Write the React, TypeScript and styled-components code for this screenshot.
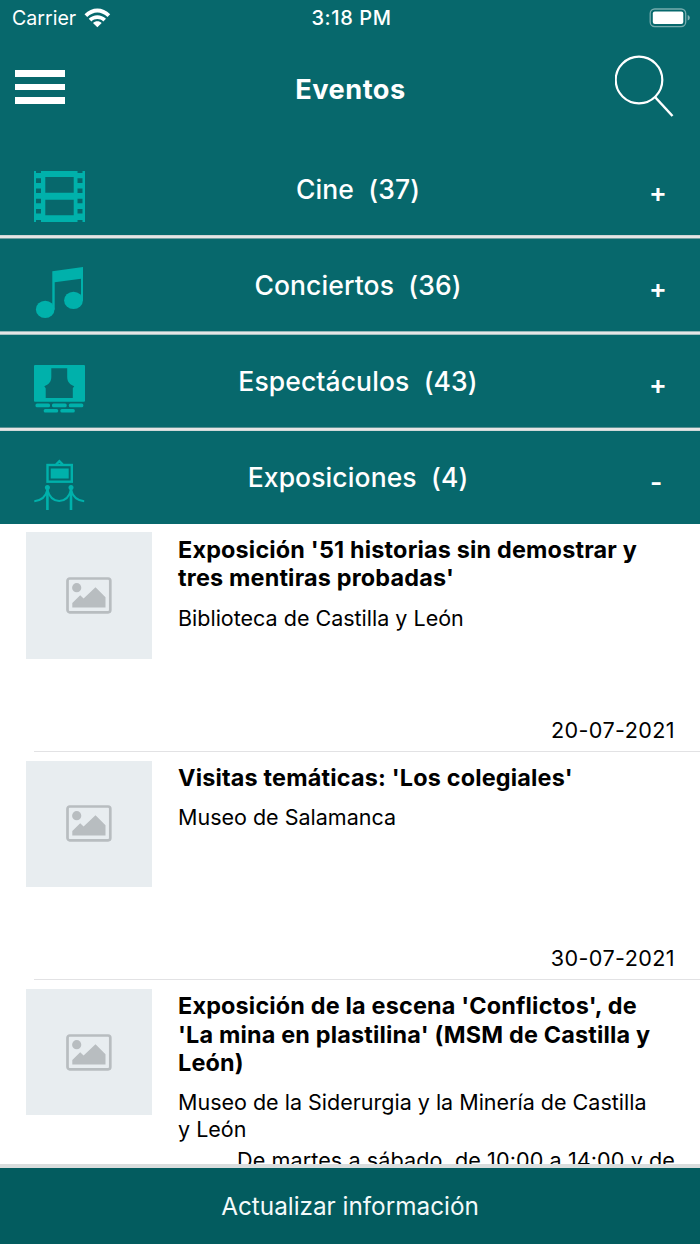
import React from 'react';
import styled, { createGlobalStyle } from 'styled-components';

const GlobalStyle = createGlobalStyle`
  * { box-sizing: border-box; }
  body { margin: 0; font-family: Inter, "Liberation Sans", sans-serif; }
  h1, h2, h3, p, ul { margin: 0; padding: 0; font: inherit; }
  button { border: 0; padding: 0; background: none; color: inherit; font: inherit; }
`;

const teal = '#07686c';
const accent = '#00b1ab';

const Screen = styled.div`
  display: flex;
  flex-direction: column;
  width: 700px;
  height: 1244px;
  overflow: hidden;
  background: #fff;
`;

const StatusBar = styled.div`
  flex: none;
  display: grid;
  grid-template-columns: 1fr auto 1fr;
  align-items: center;
  height: 36px;
  padding: 0 9px 0 12px;
  background: ${teal};
  color: #fff;
`;

const Carrier = styled.div`
  display: flex;
  align-items: center;
  gap: 8px;
  font-size: 19.6px;
  line-height: 24px;
`;

const Clock = styled.div`
  font-size: 20px;
  line-height: 24px;
  font-weight: 500;
  letter-spacing: 0.6px;
`;

const Battery = styled.svg`
  justify-self: end;
  display: block;
  margin-top: -1px;
`;

const NavBar = styled.header`
  flex: none;
  display: grid;
  grid-template-columns: 100px 1fr 100px;
  height: 107px;
  background: ${teal};
  color: #fff;
`;

const MenuButton = styled.button`
  display: flex;
  flex-direction: column;
  gap: 7px;
  width: 50px;
  margin: 34px 0 0 15px;
  align-self: start;
`;

const MenuBar = styled.span`
  height: 6.6px;
  background: #fff;
`;

const NavTitle = styled.h1`
  padding: 37px 0 0 1px;
  text-align: center;
  font-size: 27.2px;
  line-height: 34px;
  font-weight: 700;
  letter-spacing: 0.5px;
`;

const SearchButton = styled.button`
  justify-self: end;
  align-self: start;
  margin: 18px 25px 0 0;
  line-height: 0;
`;

const CategoryRow = styled.button<{ $open: boolean }>`
  flex: none;
  display: grid;
  grid-template-columns: 52px 1fr 51px;
  align-items: start;
  height: ${(p) => (p.$open ? 93 : 92)}px;
  padding-left: 34px;
  background: ${teal};
  color: #fff;
`;

const CategoryIcon = styled.svg`
  display: block;
  margin-top: 28px;
  fill: ${accent};
`;

const CategoryName = styled.span`
  padding: 30px 19px 0 0;
  text-align: center;
  white-space: pre;
  font-size: 26.5px;
  line-height: 32px;
  font-weight: 550;
  letter-spacing: 0.1px;
`;

const Toggle = styled.span<{ $open: boolean }>`
  padding: ${(p) => (p.$open ? '35px 0 0 1px' : '33px 0 0 0')};
  text-align: left;
  font-size: 26.5px;
  line-height: 32px;
  font-weight: 600;
`;

const Divider = styled.div<{ $top: string; $bottom: string }>`
  flex: none;
  height: 4px;
  background: #e5e5e5;
  border-top: 1px solid ${(p) => p.$top};
  border-bottom: 1px solid ${(p) => p.$bottom};
`;

const EventList = styled.ul`
  flex: 1;
  min-height: 0;
  overflow: hidden;
  list-style: none;
`;

const EventItem = styled.li<{ $fit: boolean }>`
  display: flex;
  flex-direction: column;
  min-height: ${(p) => (p.$fit ? '0' : '228.2px')};
`;

const EventContent = styled.div`
  flex: 1;
  display: grid;
  grid-template-columns: 127px 1fr;
  column-gap: 25.500px;
  padding: 8.4px 25px 7.4px 25.5px;
`;

const Thumb = styled.div`
  display: flex;
  align-items: center;
  justify-content: center;
  width: 126.5px;
  height: 126.5px;
  padding-left: 1px;
  background: #e8edf0;
`;

const EventText = styled.div`
  display: flex;
  flex-direction: column;
  padding-top: 3.6px;
  color: #000;
`;

const EventTitle = styled.h3`
  white-space: pre-line;
  font-size: 23.4px;
  line-height: 28.4px;
  font-weight: 700;
  letter-spacing: 0.18px;
`;

const Venue = styled.p`
  margin-top: 11.8px;
  white-space: pre-line;
  font-size: 21.5px;
  line-height: 26.2px;
`;

const When = styled.p<{ $spacing: number }>`
  margin-top: auto;
  padding-top: 5.4px;
  text-align: right;
  white-space: nowrap;
  font-size: 21.6px;
  line-height: 26.2px;
  letter-spacing: ${(p) => p.$spacing}px;
`;

const Separator = styled.div`
  height: 1.5px;
  margin-left: 34px;
  background: #e2e2e4;
`;

const Footer = styled.button`
  flex: none;
  height: 80px;
  border-top: 4px solid #d9dddd;
  background: #035c5f;
  color: #f4fafa;
  font-size: 24.3px;
  line-height: 30px;
`;

const WifiIcon = () => (
  <svg width="27" height="20" viewBox="0 0 27 20" fill="#fff">
    <path d="M0.5 6.3C8 -1.4 18.700 -1.4 26.200 6.300L23.500 9C17.400 3 9.300 3 3.200 9Z" />
    <path d="M4.700 10.700C9.500 6 17.200 6 22 10.700L19.300 13.400C16 10.200 10.700 10.200 7.400 13.400Z" />
    <path d="M9 15C11.300 12.700 15.400 12.700 17.700 15L13.350 19.300Z" />
  </svg>
);

const SearchIcon = () => (
  <svg width="60" height="64" viewBox="0 0 60 64" fill="none" stroke="#fff" strokeWidth="2.200">
    <circle cx="24" cy="26" r="23.300" />
    <path d="M40 43L57.500 62" strokeWidth="2.500" />
  </svg>
);

const FilmIcon = () => (
  <path
    fillRule="evenodd"
    d="M0 0H2V2H7V0H43.500V2H48.500V0H51V51H48.500V49H43.500V51H7V49H2V51H0Z
       M2 7.300H7V12H2Z M2 17.500H7V22H2Z M2 27.700H7V32.300H2Z M2 38H7V42.500H2Z
       M43.500 7.300H48.500V12H43.500Z M43.500 17.500H48.500V22H43.500Z M43.500 27.700H48.500V32.300H43.500Z M43.500 38H48.500V42.500H43.500Z
       M11.300 6H39.700V21.700H11.300Z M11.300 28.700H39.700V44.300H11.300Z"
  />
);

const MusicIcon = () => (
  <>
    <path d="M18.300 4.300L49 0V33.500H47V11.700L20.700 15.200V42.500H18.300Z" />
    <ellipse cx="11.200" cy="42.400" rx="9.300" ry="8.600" />
    <ellipse cx="39.500" cy="33.400" rx="9.400" ry="8.600" />
  </>
);

const StageIcon = () => (
  <>
    <path
      fillRule="evenodd"
      d="M1 2H50Q51 2 51 3V37.700Q51 38.700 50 38.700H1Q0 38.700 0 37.700V3Q0 2 1 2Z
         M17.300 5.300H33.200V14C33.200 19 36 21.500 40.200 23.300L38.800 25.300V35H11.700V25.300L10.300 23.300C14.500 21.500 17.300 19 17.300 14Z"
    />
    <rect x="1.500" y="40.600" width="14.500" height="3.600" rx="1.500" />
    <rect x="18" y="40.600" width="14.700" height="3.600" rx="1.500" />
    <rect x="34.800" y="40.600" width="14.500" height="3.600" rx="1.500" />
    <rect x="9.700" y="46" width="14.500" height="3.600" rx="1.500" />
    <rect x="26.300" y="46" width="14.500" height="3.600" rx="1.500" />
  </>
);

const ExhibitIcon = () => (
  <>
    <rect x="13.500" y="6" width="24.300" height="16.700" fill="none" stroke={accent} strokeWidth="2.400" />
    <rect x="16.700" y="9.500" width="18" height="10" />
    <path d="M22.500 5L25.400 2.200L28.300 5" fill="none" stroke={accent} strokeWidth="2.400" strokeLinecap="round" />
    <circle cx="13.400" cy="28.400" r="2.500" />
    <circle cx="37" cy="28.400" r="2.500" />
    <g fill="none" stroke={accent} strokeWidth="2.100">
      <path d="M13.400 28V51M37 28V51" strokeWidth="2.600" />
      <path d="M13.400 31C11.500 38.500 7 41.600 0.300 42.200" />
      <path d="M13.400 31C15.500 38.500 19.500 42 25.200 42C31 42 35 38.500 37 31" />
      <path d="M37 31C39 38.500 43.500 41.600 50.200 42.200" />
    </g>
  </>
);

const PictureIcon = () => (
  <svg width="46" height="37" viewBox="0 0 46 37" fill="#b8bdc0">
    <rect x="1.500" y="1.500" width="42.800" height="33.800" rx="2.200" fill="none" stroke="#b8bdc0" strokeWidth="2.700" />
    <circle cx="10.700" cy="10.700" r="4.600" />
    <path d="M6.300 30.500V26L14.200 18.300L17.600 21.600L29.500 10.200L39.500 20.200V30.500Z" />
  </svg>
);

const categories = [
  { name: 'Cine', count: 37, icon: <FilmIcon />, open: false, edge: ['#d0d6d6', '#709fa1'] },
  { name: 'Conciertos', count: 36, icon: <MusicIcon />, open: false, edge: ['#93b5b7', '#a5c0c1'] },
  { name: 'Espectáculos', count: 43, icon: <StageIcon />, open: false, edge: ['#5c9295', '#d0d9d9'] },
  { name: 'Exposiciones', count: 4, icon: <ExhibitIcon />, open: true, edge: null },
];

const events = [
  {
    title: "Exposición '51 historias sin demostrar y\ntres mentiras probadas'",
    venue: 'Biblioteca de Castilla y León',
    when: '20-07-2021',
    spacing: 0.4,
    fit: false,
  },
  {
    title: "Visitas temáticas: 'Los colegiales'",
    venue: 'Museo de Salamanca',
    when: '30-07-2021',
    spacing: 0.4,
    fit: false,
  },
  {
    title: "Exposición de la escena 'Conflictos', de\n'La mina en plastilina' (MSM de Castilla y\nLeón)",
    venue: 'Museo de la Siderurgia y la Minería de Castilla\ny León',
    when: 'De martes a sábado, de 10:00 a 14:00 y de',
    spacing: 0.08,
    fit: true,
  },
];

export default function App() {
  return (
    <>
      <GlobalStyle />
      <Screen>
        <StatusBar>
          <Carrier>
            Carrier
            <WifiIcon />
          </Carrier>
          <Clock>3:18 PM</Clock>
          <Battery width="42" height="20" viewBox="0 0 42 20">
            <rect x="1.200" y="1" width="35.500" height="17.600" rx="4.500" fill="none" stroke="#fff" strokeOpacity="0.450" strokeWidth="1.300" />
            <rect x="3.800" y="3.500" width="30.500" height="12.500" rx="2" fill="#fff" />
            <path d="M38.700 7Q40.800 7.800 40.800 9.800Q40.800 11.800 38.700 12.600Z" fill="#fff" fillOpacity="0.500" />
          </Battery>
        </StatusBar>
        <NavBar>
          <MenuButton aria-label="Menú">
            <MenuBar />
            <MenuBar />
            <MenuBar />
          </MenuButton>
          <NavTitle>Eventos</NavTitle>
          <SearchButton aria-label="Buscar">
            <SearchIcon />
          </SearchButton>
        </NavBar>
        {categories.map((c) => (
          <React.Fragment key={c.name}>
            <CategoryRow $open={c.open}>
              <CategoryIcon width="52" height="52" viewBox="0 0 52 52">
                {c.icon}
              </CategoryIcon>
              <CategoryName>{`${c.name}  (${c.count})`}</CategoryName>
              <Toggle $open={c.open}>{c.open ? '-' : '+'}</Toggle>
            </CategoryRow>
            {c.edge && <Divider $top={c.edge[0]} $bottom={c.edge[1]} />}
          </React.Fragment>
        ))}
        <EventList>
          {events.map((e) => (
            <EventItem key={e.title} $fit={e.fit}>
              <EventContent>
                <Thumb>
                  <PictureIcon />
                </Thumb>
                <EventText>
                  <EventTitle>{e.title}</EventTitle>
                  <Venue>{e.venue}</Venue>
                  <When $spacing={e.spacing}>{e.when}</When>
                </EventText>
              </EventContent>
              <Separator />
            </EventItem>
          ))}
        </EventList>
        <Footer>Actualizar información</Footer>
      </Screen>
    </>
  );
}
